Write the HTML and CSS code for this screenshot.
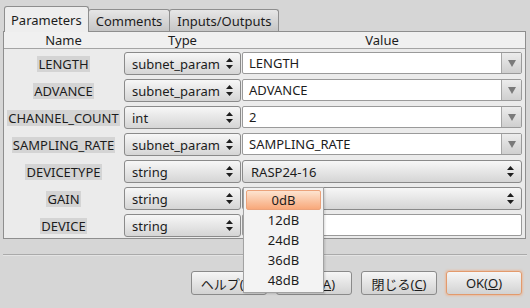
FILE: index.html
```html
<!DOCTYPE html>
<html lang="ja">
<head>
  <meta charset="UTF-8">
  <title>Parameters</title>
  <link rel="stylesheet" href="styles.css">
</head>
<body>

<div class="dialog">
  <div class="tabs">
    <div class="tab active">Parameters</div>
    <div class="tab">Comments</div>
    <div class="tab">Inputs/Outputs</div>
  </div>

  <div class="panel">
    <div class="head">
      <div>Name</div>
      <div>Type</div>
      <div>Value</div>
    </div>

    <div class="rows">
      <div class="row">
        <div class="name"><span>LENGTH</span></div>
        <div class="combo">subnet_param<svg class="updown" viewBox="0 0 7 11"><polygon points="3.5,0 7,4 0,4"/><polygon points="0,7 7,7 3.5,11"/></svg></div>
        <div class="field">LENGTH<b class="drop"></b></div>
      </div>
      <div class="row">
        <div class="name"><span>ADVANCE</span></div>
        <div class="combo">subnet_param<svg class="updown" viewBox="0 0 7 11"><polygon points="3.5,0 7,4 0,4"/><polygon points="0,7 7,7 3.5,11"/></svg></div>
        <div class="field">ADVANCE<b class="drop"></b></div>
      </div>
      <div class="row">
        <div class="name"><span>CHANNEL_COUNT</span></div>
        <div class="combo">int<svg class="updown" viewBox="0 0 7 11"><polygon points="3.5,0 7,4 0,4"/><polygon points="0,7 7,7 3.5,11"/></svg></div>
        <div class="field">2<b class="drop"></b></div>
      </div>
      <div class="row">
        <div class="name"><span>SAMPLING_RATE</span></div>
        <div class="combo">subnet_param<svg class="updown" viewBox="0 0 7 11"><polygon points="3.5,0 7,4 0,4"/><polygon points="0,7 7,7 3.5,11"/></svg></div>
        <div class="field">SAMPLING_RATE<b class="drop"></b></div>
      </div>
      <div class="row">
        <div class="name"><span>DEVICETYPE</span></div>
        <div class="combo">string<svg class="updown" viewBox="0 0 7 11"><polygon points="3.5,0 7,4 0,4"/><polygon points="0,7 7,7 3.5,11"/></svg></div>
        <div class="combo wide">RASP24-16<svg class="updown" viewBox="0 0 7 11"><polygon points="3.5,0 7,4 0,4"/><polygon points="0,7 7,7 3.5,11"/></svg></div>
      </div>
      <div class="row">
        <div class="name"><span>GAIN</span></div>
        <div class="combo">string<svg class="updown" viewBox="0 0 7 11"><polygon points="3.5,0 7,4 0,4"/><polygon points="0,7 7,7 3.5,11"/></svg></div>
        <div class="combo wide"><span></span><svg class="updown" viewBox="0 0 7 11"><polygon points="3.5,0 7,4 0,4"/><polygon points="0,7 7,7 3.5,11"/></svg></div>
      </div>
      <div class="row">
        <div class="name"><span>DEVICE</span></div>
        <div class="combo">string<svg class="updown" viewBox="0 0 7 11"><polygon points="3.5,0 7,4 0,4"/><polygon points="0,7 7,7 3.5,11"/></svg></div>
        <div class="field"><b class="drop"></b></div>
      </div>
    </div>
  </div>

  <div class="sep"></div>

  <div class="buttons">
    <button>ヘルプ(<u>H</u>)</button>
    <button>適用(<u>A</u>)</button>
    <button>閉じる(<u>C</u>)</button>
    <button class="default">OK(<u>O</u>)</button>
  </div>

  <!-- open list of the GAIN combo -->
  <div class="popup">
    <div class="item current">0dB</div>
    <div class="item">12dB</div>
    <div class="item">24dB</div>
    <div class="item">36dB</div>
    <div class="item">48dB</div>
  </div>
</div>

</body>
</html>
```

FILE: styles.css
```css
body {
  margin: 0;
  background: #d6d6d6;
  font-family: "Noto Sans", "Noto Sans CJK JP", sans-serif;
  font-size: 13px;
  color: #1c1c1c;
}

.dialog {
  position: relative;
  width: 530px;
  height: 308px;
}

.tabs {
  display: flex;
  align-items: flex-end;
  height: 25px;
  padding: 6px 0 0 4px;
}

.tab {
  box-sizing: border-box;
  height: 22px;
  padding: 0 7px;
  margin-left: -1px;
  display: flex;
  align-items: center;
  border: 1px solid #8e8e8e;
  border-bottom: none;
  border-radius: 3px 3px 0 0;
  background: linear-gradient(#e6e6e6, #c6c6c6);
}

.tab.active {
  height: 26px;
  padding: 0 6px;
  margin: 0 0 -1px 0;
  background: #eeeeee;
  position: relative;
  z-index: 1;
}

.panel {
  box-sizing: border-box;
  height: 208px;
  margin: 0 4px 0 3px;
  border: 1px solid #8e8e8e;
  background: #ebebeb;
}

.head {
  display: grid;
  grid-template-columns: 119px 117px 280px;
  column-gap: 1px;
  height: 16px;
  line-height: 16px;
  text-align: center;
  background: #f0f0f0;
  border-bottom: 1px solid #a4a4a4;
}

.rows {
  display: flex;
  flex-direction: column;
  gap: 4px;
  padding-top: 3px;
}

.row {
  display: grid;
  grid-template-columns: 119px 117px 280px;
  column-gap: 1px;
  height: 23px;
}

.name {
  display: flex;
  align-items: center;
  justify-content: center;
}

.name span {
  background: #d4d4d4;
  padding: 0 1px;
  line-height: 16px;
}

.combo {
  box-sizing: border-box;
  height: 23px;
  padding: 0 7px;
  display: flex;
  align-items: center;
  justify-content: space-between;
  border: 1px solid #8a8a8a;
  border-radius: 3px;
  background: linear-gradient(#f7f7f7, #d5d5d5);
}

.combo.wide {
  padding-left: 8px;
}

.updown {
  width: 7px;
  height: 11px;
  fill: #1e1e1e;
}

.field {
  box-sizing: border-box;
  height: 22px;
  padding-left: 6px;
  display: flex;
  align-items: center;
  justify-content: space-between;
  border: 1px solid #9a9a9a;
  border-radius: 2px;
  background: #fff;
}

.drop {
  box-sizing: border-box;
  width: 20px;
  height: 20px;
  border-left: 1px solid #a6a6a6;
  background: linear-gradient(#ececec, #cfcfcf);
  display: flex;
  align-items: center;
  justify-content: center;
}

.drop::after {
  content: "";
  border-left: 4px solid transparent;
  border-right: 4px solid transparent;
  border-top: 7px solid #7a7a7a;
}

.sep {
  margin: 15px 3px 0 3px;
  border-top: 1px solid #aaaaaa;
  border-bottom: 1px solid #e4e4e4;
}

.buttons {
  display: flex;
  justify-content: flex-end;
  gap: 9px;
  padding: 15px 8px 0 0;
}

button {
  width: 76px;
  height: 24px;
  padding: 0;
  font: inherit;
  color: inherit;
  border: 1px solid #8a8a8a;
  border-radius: 3px;
  background: linear-gradient(#f6f6f6, #d2d2d2);
}

button.default {
  border-color: #e39a6c;
  box-shadow: 0 0 2px 1px rgba(248, 170, 120, 0.55);
}

.popup {
  position: absolute;
  left: 243px;
  top: 187px;
  box-sizing: border-box;
  width: 81px;
  height: 106px;
  padding: 2px;
  border: 1px solid #a2a2a2;
  background: #f3f3f3;
  box-shadow: 1px 1px 2px rgba(0, 0, 0, 0.15);
}

.item {
  box-sizing: border-box;
  height: 20px;
  line-height: 18px;
  text-align: center;
  border: 1px solid transparent;
}

.item.current {
  border-color: #eba27a;
  border-radius: 2px;
  background: linear-gradient(#fde4d0, #f8a87a);
}
```
